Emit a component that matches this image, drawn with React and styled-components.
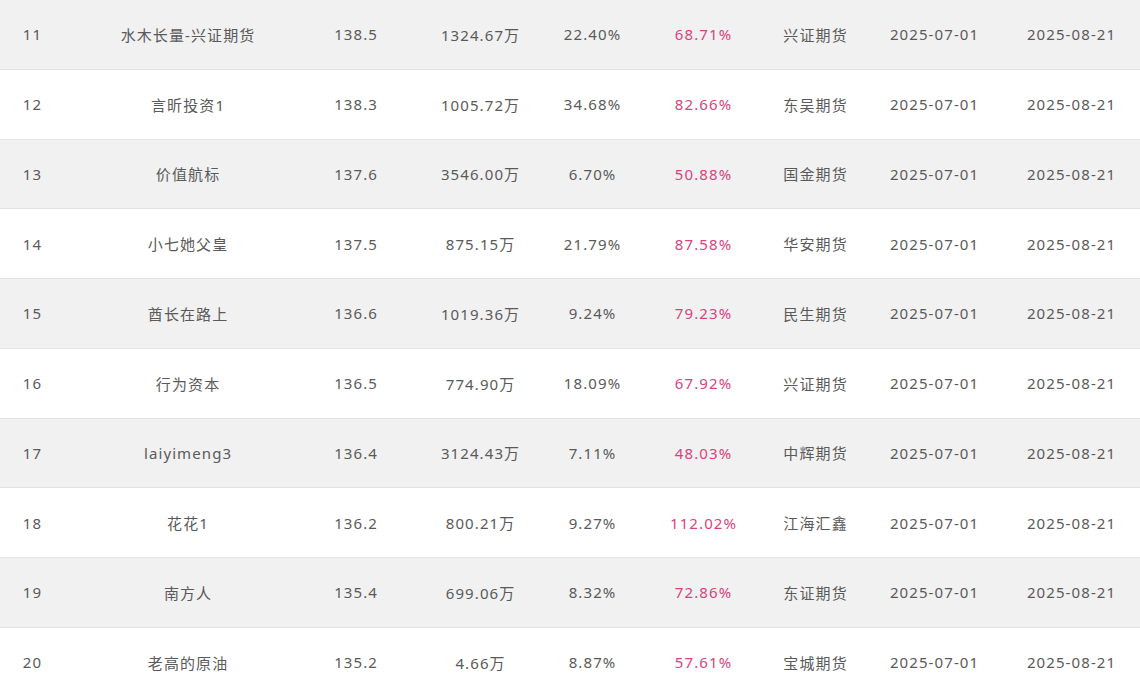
import React from "react";
import styled, { createGlobalStyle } from "styled-components";

const GlobalStyle = createGlobalStyle`
  html, body {
    margin: 0;
    padding: 0;
    background: #fff;
  }
  body {
    font-family: "Noto Sans", "Noto Sans CJK SC", sans-serif;
  }
`;

const Table = styled.div`
  width: 1140px;
  display: flex;
  flex-direction: column;
`;

const Row = styled.div`
  display: grid;
  grid-template-columns: 64px 247px 89px 160px 64px 158px 66px 172px 102px 18px;
  height: 69.75px;
  box-sizing: border-box;
  background: ${(props) => (props.striped ? "#f1f1f1" : "#fff")};
  border-bottom: 1px solid #e3e3e3;
`;

const Cell = styled.div`
  display: flex;
  align-items: center;
  justify-content: center;
  white-space: nowrap;
  font-size: 15px;
  letter-spacing: 1.1px;
  padding-left: 1.1px;
  color: ${(props) => (props.pink ? "#d8437e" : "#5a5a5a")};
`;

const rows = [
  [11, "水木长量-兴证期货", "138.5", "1324.67万", "22.40%", "68.71%", "兴证期货"],
  [12, "言昕投资1", "138.3", "1005.72万", "34.68%", "82.66%", "东吴期货"],
  [13, "价值航标", "137.6", "3546.00万", "6.70%", "50.88%", "国金期货"],
  [14, "小七她父皇", "137.5", "875.15万", "21.79%", "87.58%", "华安期货"],
  [15, "酋长在路上", "136.6", "1019.36万", "9.24%", "79.23%", "民生期货"],
  [16, "行为资本", "136.5", "774.90万", "18.09%", "67.92%", "兴证期货"],
  [17, "laiyimeng3", "136.4", "3124.43万", "7.11%", "48.03%", "中辉期货"],
  [18, "花花1", "136.2", "800.21万", "9.27%", "112.02%", "江海汇鑫"],
  [19, "南方人", "135.4", "699.06万", "8.32%", "72.86%", "东证期货"],
  [20, "老高的原油", "135.2", "4.66万", "8.87%", "57.61%", "宝城期货"],
];

export default function App() {
  return (
    <>
      <GlobalStyle />
      <Table>
        {rows.map((r, i) => (
          <Row key={r[0]} striped={i % 2 === 0}>
            <Cell>{r[0]}</Cell>
            <Cell>{r[1]}</Cell>
            <Cell>{r[2]}</Cell>
            <Cell>{r[3]}</Cell>
            <Cell>{r[4]}</Cell>
            <Cell pink>{r[5]}</Cell>
            <Cell>{r[6]}</Cell>
            <Cell>2025-07-01</Cell>
            <Cell>2025-08-21</Cell>
            <Cell />
          </Row>
        ))}
      </Table>
    </>
  );
}
